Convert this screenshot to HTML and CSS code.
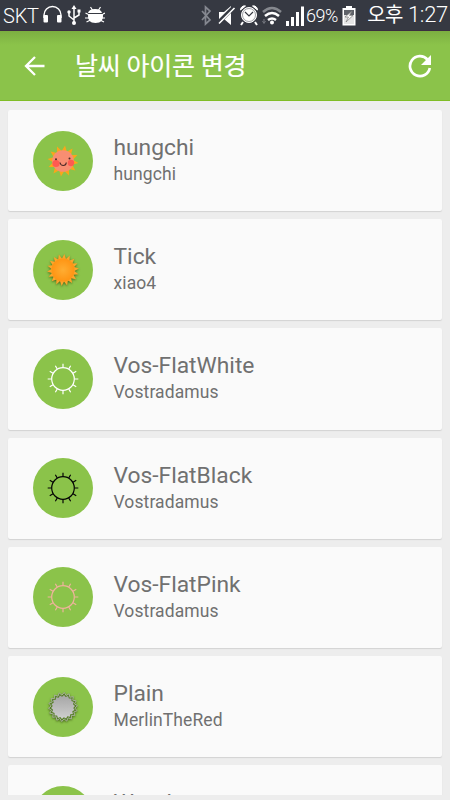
FILE: index.html
```html
<!DOCTYPE html>
<html lang="ko">
<head>
<meta charset="utf-8">
<title>날씨 아이콘 변경</title>
<link rel="stylesheet" href="styles.css">
</head>
<body>
<div class="screen">
  <header class="status">
    <span class="carrier">SKT</span>
    <svg class="status-icons" width="64" height="30" viewBox="0 0 64 30" fill="none" stroke="#fff">
      <path d="M3 18v-3a8.500 8.500 0 0 1 17 0v3" stroke-width="1.400"/>
      <path d="M3.500 16h2.500v5.500H3.500zM17 16h2.500v5.500H17z" fill="#fff" stroke-width="2" stroke-linejoin="round"/>
      <path d="M33 8v15M28 12v4l5 4M38 11v4l-5 3" stroke-width="1.500"/>
      <path d="M30.500 9L33 5l2.500 4zM36.500 9.500h3v3h-3z" fill="#fff" stroke="none"/>
      <circle cx="28" cy="12" r="1.700" fill="#fff" stroke="none"/><circle cx="33" cy="23" r="2" fill="#fff" stroke="none"/>
      <path d="M47 13q1-4 7-4t7 4zM47 14h15q1 9-7.500 9T47 14z" fill="#fff" stroke="none"/>
      <path d="M49.500 7l2.500 4M59.500 7l-2.500 4M44.500 13l4 2M64 13l-4 2M44 18h5M64 18h-4M45.500 22l4-2M63 22l-4-2" stroke-width="1.200"/>
      <path d="M47 13.500h15" stroke="#383b43" stroke-width=".7"/>
    </svg>
    <svg class="status-icons right" width="105" height="30" viewBox="0 0 105 30" fill="none" stroke="#fff">
      <path d="M2 11l8 9-4.500 4V7l4.500 4-8 9" stroke="#858890" stroke-width="1.700"/>
      <path d="M19 12h5l7-6v19l-7-6h-5z" fill="#fff" stroke="none"/>
      <path d="M18 23L34 7" stroke="#363942" stroke-width="4"/><path d="M19 23.500L34.500 8" stroke-width="1.600"/>
      <circle cx="49" cy="15" r="7.500" fill="#fff"/><circle cx="49" cy="15" r="6.500" stroke="#74777e" stroke-width=".7"/>
      <path d="M40.500 10a4 4 0 0 1 5-4zM57.500 10a4 4 0 0 0-5-4z" fill="#fff"/>
      <path d="M43 22l-2 3M55 22l2 3" stroke-width="2"/>
      <path d="M45 12l4 4 4-4" stroke="#363942" stroke-width="1.200"/>
      <path d="M63 12q9-8 18 0" stroke="#85888e" stroke-width="2.500"/><path d="M65 16q7-6 14 0M68 20q4-3 8 0" stroke-width="2.500"/>
      <circle cx="72" cy="22.500" r="2" fill="#fff" stroke="none"/>
      <path d="M64 19v4M62.500 21l1.500 2.500 1.500-2.500" stroke="#74777e" stroke-width="1"/>
      <path d="M86 21h3v5h-3zM91 17h3v9h-3zM96 12h3v14h-3zM101 6.500h3V26h-3z" fill="#fff" stroke="none"/>
    </svg>
    <span class="percent">69%</span>
    <svg class="battery" width="16" height="30" viewBox="0 0 16 30">
      <path d="M5 6h6v2h3.500v17.500h-13V8H5z" fill="#fff"/><path d="M3 10h10v5H3z" fill="#5f6269"/><path d="M3 15h10v9H3z" fill="#e4e4e4"/>
      <path d="M11 11l-7 6h3.500L5 22l7-6.500H8.500z" fill="#fff" stroke="#777" stroke-width=".7"/>
    </svg>
    <span class="clock"><span class="period">오후</span> 1:27</span>
  </header>
  <div class="toolbar">
    <svg width="22" height="22" viewBox="0 0 22 22" fill="none" stroke="#fff" stroke-width="2.300"><path d="M11 2L2 11l9 9M2 11h18.500"/></svg>
    <h1>날씨 아이콘 변경</h1>
    <svg class="refresh" width="24" height="24" viewBox="0 0 24 24"><path d="M19.500 5.500A10 10 0 1 0 21.800 14" fill="none" stroke="#fff" stroke-width="2.700"/><path d="M23 1v10H13z" fill="#fff"/></svg>
  </div>
  <main class="list">
    <article class="card"><svg class="avatar" viewBox="-30 -30 60 60">
      <polygon data-star="12,15.6,10" fill="#faa61a"/><circle r="10.800" fill="#f88e72"/>
      <circle cx="-7" cy="2.500" r="3.600" fill="#ff5a50"/><circle cx="8" cy="2" r="3.200" fill="#ff5a50"/>
      <circle cx="-7" cy="-1.800" r="1" fill="#4c2a27"/><circle cx="6.500" cy="-2.500" r="1" fill="#4c2a27"/>
      <path d="M-3 1.500q.5 3 3.300 3t3-3" fill="none" stroke="#4c2a27" stroke-width="1.100"/></svg>
      <div class="text"><h2>hungchi</h2><p>hungchi</p></div></article>
    <article class="card"><svg class="avatar" viewBox="-30 -30 60 60">
      <defs><radialGradient id="orange"><stop offset="0" stop-color="#ffad32"/><stop offset="1" stop-color="#ff9413"/></radialGradient></defs>
      <g class="shadow"><polygon data-star="18,16,11.5" fill="#fba52c"/><circle r="11.500" fill="url(#orange)"/></g></svg>
      <div class="text"><h2>Tick</h2><p>xiao4</p></div></article>
    <article class="card"><svg class="avatar line white" viewBox="-30 -30 60 60"><circle r="11.300"/><path data-rays="12,11.5,15.3"/></svg>
      <div class="text"><h2>Vos-FlatWhite</h2><p>Vostradamus</p></div></article>
    <article class="card"><svg class="avatar line black" viewBox="-30 -30 60 60"><circle r="11.300"/><path data-rays="12,11.5,15.3"/></svg>
      <div class="text"><h2>Vos-FlatBlack</h2><p>Vostradamus</p></div></article>
    <article class="card"><svg class="avatar line pink" viewBox="-30 -30 60 60"><circle r="11.300"/><path data-rays="12,11.5,15.3"/></svg>
      <div class="text"><h2>Vos-FlatPink</h2><p>Vostradamus</p></div></article>
    <article class="card"><svg class="avatar" viewBox="-30 -30 60 60">
      <defs><linearGradient id="silver" x2="0" y2="1"><stop offset="0" stop-color="#a5a5a5"/><stop offset="1" stop-color="#cfcfcf"/></linearGradient></defs>
      <g class="shadow"><polygon data-star="18,14.6,11.9" fill="#557d25" stroke="#a7b09b" stroke-width="1"/><polygon data-star="18,12,10.3" fill="url(#silver)"/></g></svg>
      <div class="text"><h2>Plain</h2><p>MerlinTheRed</p></div></article>
    <article class="card"><svg class="avatar" viewBox="-30 -30 60 60"></svg><div class="text"><h2>Wonder</h2></div></article>
  </main>
</div>
<script src="script.js"></script>
</body>
</html>
```
FILE: styles.css
```css
* { box-sizing: border-box; }
body { margin: 0; background: #ededed; font-family: Roboto, "Noto Sans CJK KR", sans-serif; }
.screen { width: 450px; height: 800px; overflow: hidden; display: flex; flex-direction: column; }
.status { height: 31px; flex: none; display: flex; align-items: center; background: #363942; border-bottom: 1px solid #3b2e40; color: #fff; padding: 0 2px 0 3px; white-space: nowrap; }
.status svg { flex: none; }
.carrier { width: 38px; padding-top: 2px; font-size: 20px; line-height: 28px; font-weight: 300; letter-spacing: -.2px; }
.status-icons.right { margin-left: 95px; }
.percent { width: 35px; margin-left: 1px; padding-top: 2px; font-size: 18px; line-height: 28px; font-weight: 300; letter-spacing: -.5px; }
.clock { margin-left: auto; font-size: 22px; line-height: 28px; font-weight: 300; letter-spacing: -.3px; }
.period { font-size: 20px; font-weight: 400; letter-spacing: -.6px; }
.toolbar { height: 70px; flex: none; display: flex; align-items: center; padding: 0 18px 0 24px; background: linear-gradient(#7cae41, #8bc34a 14px); border-bottom: 1px solid #7fbc25; color: #fff; }
.toolbar h1 { margin: 0 0 0 29px; padding-top: 3px; font-size: 25px; line-height: 36px; font-weight: 400; letter-spacing: -.25px; -webkit-text-stroke: .2px #fff; }
.refresh { margin-left: auto; }
.list { height: 694px; overflow: hidden; padding: 9px 8px 0; }
.card { height: 101.200px; margin-bottom: 8px; display: flex; align-items: center; padding-left: 25px; background: #fafafa; border-radius: 2px; box-shadow: 0 1px 1px #d2d2d2; }
.avatar { width: 60px; height: 60px; flex: none; border-radius: 50%; background: #8bc34a; }
.text { margin-left: 20.500px; height: 55px; color: #707070; }
.text h2 { margin: 0; font-size: 22.800px; line-height: 29px; font-weight: 400; }
.text p { margin: 0; font-size: 17.500px; line-height: 25px; font-weight: 400; letter-spacing: .1px; }
.line { fill: none; stroke-width: 1.200; }
.white { stroke: #fff; }
.black { stroke: #050505; }
.pink { stroke: #efb39b; }
.shadow { filter: drop-shadow(0 1px 1px rgba(40, 60, 0, .65)); }
```
FILE: script.js
```js
function point(radius, angle) {
  return (radius * Math.sin(angle)).toFixed(2) + "," + (-radius * Math.cos(angle)).toFixed(2);
}
document.querySelectorAll("[data-star]").forEach(function (el) {
  const [count, outer, inner] = el.dataset.star.split(",").map(Number);
  const points = [];
  for (let i = 0; i < count * 2; i++) points.push(point(i % 2 ? inner : outer, Math.PI * (i + 0.5) / count));
  el.setAttribute("points", points.join(" "));
});
document.querySelectorAll("[data-rays]").forEach(function (el) {
  const [count, inner, outer] = el.dataset.rays.split(",").map(Number);
  let d = "";
  for (let i = 0; i < count; i++) {
    const angle = 2 * Math.PI * i / count;
    d += "M" + point(inner, angle) + "L" + point(outer, angle);
  }
  el.setAttribute("d", d);
});
```
